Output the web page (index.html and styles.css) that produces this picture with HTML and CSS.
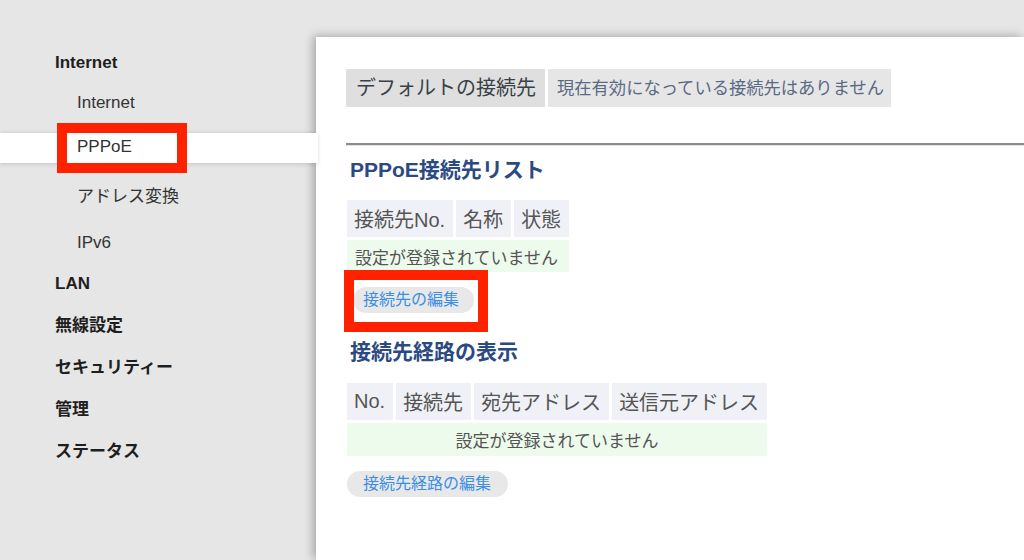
FILE: index.html
```html
<!DOCTYPE html>
<html lang="ja">
<head>
<meta charset="UTF-8" />
<meta name="viewport" content="width=device-width, initial-scale=1.0" />
<title>PPPoE設定</title>
<link rel="stylesheet" href="styles.css">
</head>
<body>
<div class="layout">
    <nav class="sidebar">
        <div class="group-title">Internet</div>
        <div class="sub-item">Internet</div>
        <div class="sub-item active">PPPoE</div>
        <div class="sub-item nat">アドレス変換</div>
        <div class="sub-item ipv6">IPv6</div>
        <div class="group-title">LAN</div>
        <div class="group-title">無線設定</div>
        <div class="group-title">セキュリティー</div>
        <div class="group-title">管理</div>
        <div class="group-title">ステータス</div>
    </nav>
    <main class="panel">
        <div class="default-row">
            <div class="default-label">デフォルトの接続先</div>
            <div class="default-value">現在有効になっている接続先はありません</div>
        </div>
        <div class="divider"></div>

        <h2 class="section-title first">PPPoE接続先リスト</h2>
        <table class="list">
            <thead>
                <tr>
                    <th>接続先No.</th>
                    <th>名称</th>
                    <th>状態</th>
                </tr>
            </thead>
            <tbody>
                <tr><td colspan="3" class="empty">設定が登録されていません</td></tr>
            </tbody>
        </table>
        <a class="pill-btn edit-btn">接続先の編集</a>

        <h2 class="section-title second">接続先経路の表示</h2>
        <table class="list routes">
            <thead>
                <tr>
                    <th>No.</th>
                    <th>接続先</th>
                    <th>宛先アドレス</th>
                    <th>送信元アドレス</th>
                </tr>
            </thead>
            <tbody>
                <tr><td colspan="4" class="empty center">設定が登録されていません</td></tr>
            </tbody>
        </table>
        <a class="pill-btn route-btn">接続先経路の編集</a>
    </main>
</div>

<!-- annotation boxes -->
<div class="mark mark-nav"></div>
<div class="mark mark-btn"></div>
</body>
</html>
```

FILE: styles.css
```css
body { margin: 0; background: #e6e6e6; color: #222; font-family: "Liberation Sans", "Noto Sans CJK JP", sans-serif; height: 560px; overflow: hidden; }
.layout { display: flex; height: 560px; }

/* sidebar */
.sidebar { width: 316px; flex-shrink: 0; padding-top: 43px; position: relative; z-index: 2; font-size: 17px; }
.group-title { height: 42px; line-height: 42px; padding-left: 55px; font-weight: bold; color: #1e1e1e; }
.sidebar .group-title:first-child { height: 40px; line-height: 40px; }
.sub-item { height: 40px; line-height: 40px; padding-left: 77px; color: #333; }
.sub-item.active { background: #fff; height: 30px; line-height: 27px; margin-top: 10px; box-shadow: 0 -1px 3px rgba(0,0,0,0.08), 0 2px 4px rgba(0,0,0,0.1); margin-right: -2px; }
.sub-item.nat { margin-top: 14px; }
.sub-item.ipv6 { margin-top: 6px; }

/* main panel */
.panel { flex: 1; margin-top: 37px; background: #fff; padding: 32px 0 0 30px; box-shadow: -3px -1px 9px rgba(0,0,0,0.28); position: relative; z-index: 1; }

.default-row { display: flex; gap: 3px; }
.default-label { height: 38px; line-height: 38px; padding: 0 9px 0 10px; background: #dfdfdf; font-size: 20px; color: #3a3f48; }
.default-value { height: 38px; line-height: 38px; padding: 0 7px 0 9px; background: #e6e6e6; font-size: 17.3px; color: #5a6a84; }

.divider { margin-top: 36px; border-top: 2px solid #8c8c8c; border-bottom: 1px solid #e0e0e0; }

.section-title { margin: 0; font-size: 21px; line-height: 26px; font-weight: bold; color: #2c4a82; padding-left: 4px; }
.section-title.first { margin-top: 11px; }
.section-title.second { margin-top: 26px; }

table.list { border-collapse: separate; border-spacing: 3px; margin-left: -2px; margin-top: 14px; }
table.list th { height: 37px; padding: 0 8px 0 7px; background: #f0f1f7; font-size: 20px; font-weight: normal; color: #555; text-align: left; }
table.list td.empty { height: 32px; padding: 0 8px; background: #edfbec; font-size: 17px; color: #555; }
table.list td.center { text-align: center; }
table.routes { margin-top: 15px; }
table.routes td.empty { height: 33px; }

.pill-btn { display: inline-block; height: 26px; line-height: 26px; background: #e8e8e8; border-radius: 13px; color: #3b8ee4; font-size: 16px; }
.edit-btn { margin: 12px 0 0 7px; padding: 0 15px 0 10px; }
.route-btn { margin: 12px 0 0 1px; padding: 0 17px 0 16px; }

/* red annotation frames */
.mark { position: absolute; border: 10px solid #ff2200; box-sizing: border-box; z-index: 5; }
.mark-nav { left: 57px; top: 123px; width: 130px; height: 50px; }
.mark-btn { left: 344px; top: 270px; width: 144px; height: 62px; }
```
